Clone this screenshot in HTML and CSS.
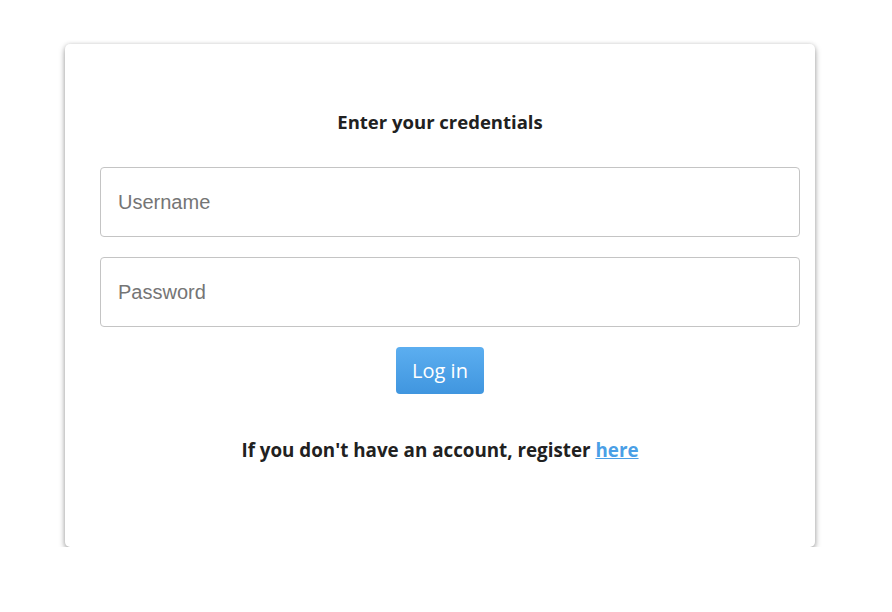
FILE: index.html
```html
<!DOCTYPE html>
<html lang="en">
<head>
<meta charset="utf-8">
<title>Login</title>
<link rel="stylesheet" href="styles.css">
</head>
<body>
<div class="page">
  <form class="card">
    <h2 class="title">Enter your credentials</h2>
    <input class="field" type="text" placeholder="Username">
    <input class="field" type="password" placeholder="Password">
    <div class="actions"><button class="btn" type="button">Log in</button></div>
    <p class="register">If you don't have an account, register <a href="#">here</a></p>
  </form>
</div>
</body>
</html>
```
FILE: styles.css
```css
html, body {
  margin: 0;
  padding: 0;
  background: #ffffff;
}
.page {
  padding: 44px 77px 0 65px;
}
.card {
  width: 750px;
  box-sizing: border-box;
  background: #fff;
  border-radius: 5px;
  box-shadow: 0 3px 6px rgba(0,0,0,0.35), 0 0 4px rgba(0,0,0,0.12);
  padding: 65px 15px 84px 35px;
  display: flex;
  flex-direction: column;
  font-family: "Open Sans", "Noto Sans", sans-serif;
  color: #212121;
}
.title {
  margin: 0 0 33px -20px;
  font-size: 18.5px;
  line-height: 25px;
  font-weight: 700;
  text-align: center;
}
.field {
  display: block;
  width: 700px;
  height: 70px;
  box-sizing: border-box;
  border: 1px solid #c4c4c4;
  border-radius: 4px;
  padding: 0 17px;
  font-family: "Liberation Sans", Arial, sans-serif;
  font-size: 20px;
  color: #333;
  margin: 0 0 20px 0;
  outline: none;
}
.field::placeholder {
  color: #757575;
}
.actions {
  display: flex;
  justify-content: center;
  margin-left: -20px;
}
.btn {
  width: 88px;
  height: 47px;
  border: none;
  border-radius: 4px;
  background: linear-gradient(#5caef0, #4096df);
  color: #fff;
  font-family: "Open Sans", "Noto Sans", sans-serif;
  font-size: 20px;
  padding: 0;
  cursor: pointer;
}
.register {
  margin: 43px 0 0 -20px;
  text-align: center;
  font-size: 18.8px;
  line-height: 26px;
  font-weight: 700;
}
.register a {
  color: #4a9fe6;
}
```
